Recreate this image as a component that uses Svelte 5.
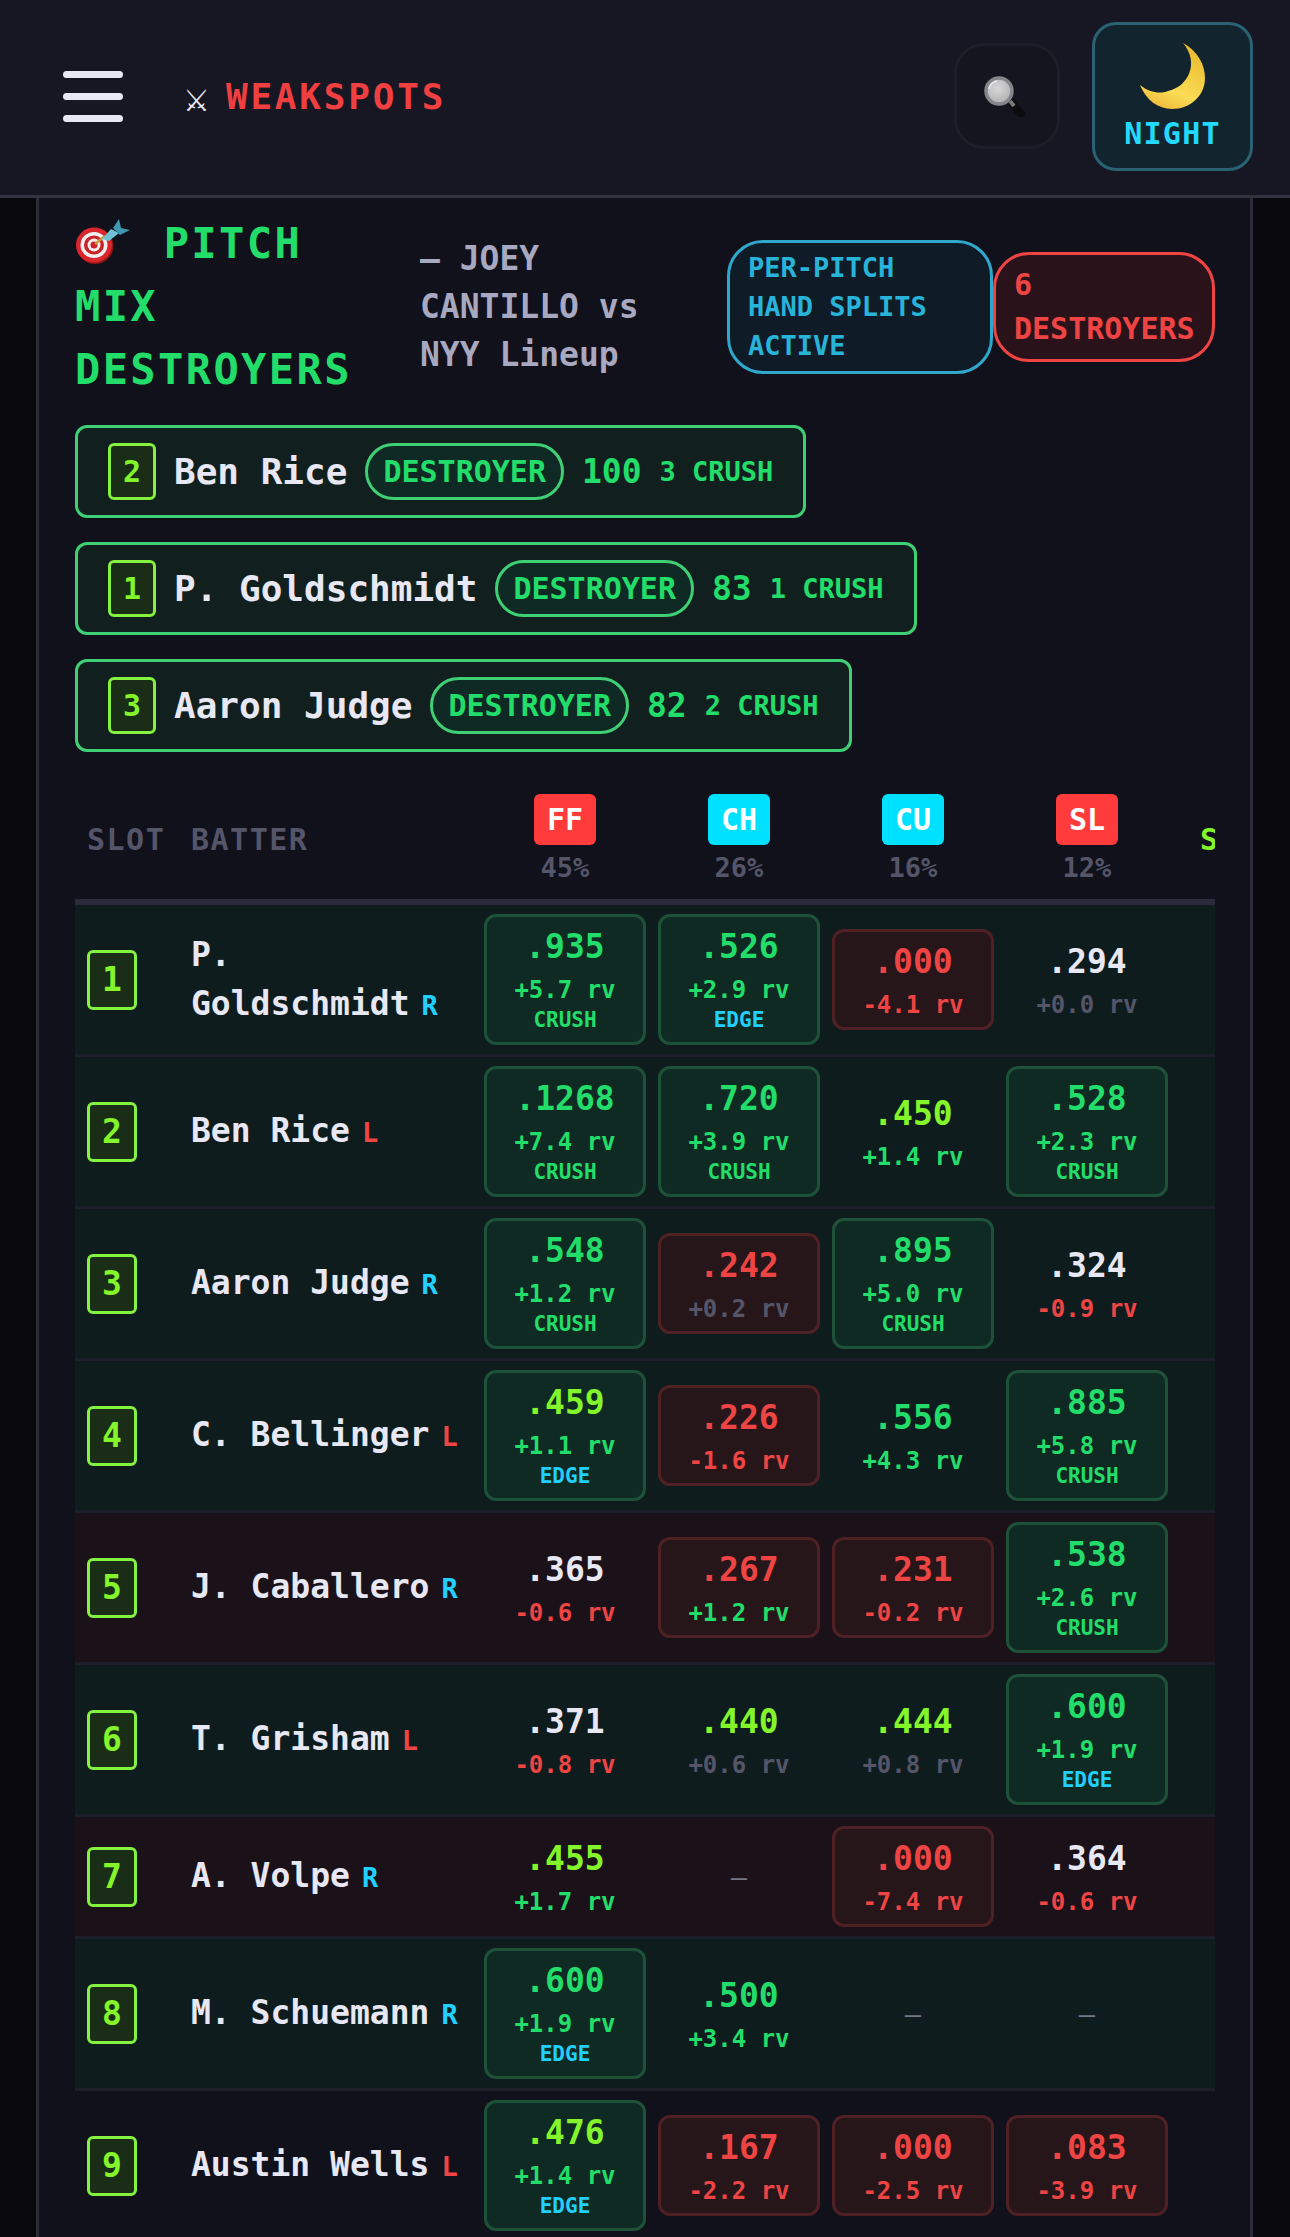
<script>
    const top_batters = [
        { slot: 2, name: "Ben Rice", score: 100, crush: 3 },
        { slot: 1, name: "P. Goldschmidt", score: 83, crush: 1 },
        { slot: 3, name: "Aaron Judge", score: 82, crush: 2 }
    ];

    const pitches = [
        { code: "FF", pct: "45%", kind: "hard" },
        { code: "CH", pct: "26%", kind: "soft" },
        { code: "CU", pct: "16%", kind: "soft" },
        { code: "SL", pct: "12%", kind: "hard" }
    ];

    // value, value colour, rv, rv colour, box, tag
    const c = (v, vc, rv, rc, box = "", tag = "") => ({ v, vc, rv, rc, box, tag });
    const crush = (v, rv) => c(v, "g", rv, "g", "g", "CRUSH");
    const edge = (v, vc, rv) => c(v, vc, rv, "g", "g", "EDGE");
    const bad = (v, rv, rc = "r") => c(v, "r", rv, rc, "r");
    const none = { dash: true };

    const rows = [
        { slot: 1, name: "P. Goldschmidt", hand: "R", tone: "good", cells: [crush(".935", "+5.7"), edge(".526", "g", "+2.9"), bad(".000", "-4.1"), c(".294", "w", "+0.0", "m")] },
        { slot: 2, name: "Ben Rice", hand: "L", tone: "good", cells: [crush(".1268", "+7.4"), crush(".720", "+3.9"), c(".450", "l", "+1.4", "g"), crush(".528", "+2.3")] },
        { slot: 3, name: "Aaron Judge", hand: "R", tone: "good", cells: [crush(".548", "+1.2"), bad(".242", "+0.2", "m"), crush(".895", "+5.0"), c(".324", "w", "-0.9", "r")] },
        { slot: 4, name: "C. Bellinger", hand: "L", tone: "good", cells: [edge(".459", "l", "+1.1"), bad(".226", "-1.6"), c(".556", "g", "+4.3", "g"), crush(".885", "+5.8")] },
        { slot: 5, name: "J. Caballero", hand: "R", tone: "poor", cells: [c(".365", "w", "-0.6", "r"), bad(".267", "+1.2", "g"), bad(".231", "-0.2"), crush(".538", "+2.6")] },
        { slot: 6, name: "T. Grisham", hand: "L", tone: "good", cells: [c(".371", "w", "-0.8", "r"), c(".440", "l", "+0.6", "m"), c(".444", "l", "+0.8", "m"), edge(".600", "g", "+1.9")] },
        { slot: 7, name: "A. Volpe", hand: "R", tone: "poor", cells: [c(".455", "l", "+1.7", "g"), none, bad(".000", "-7.4"), c(".364", "w", "-0.6", "r")] },
        { slot: 8, name: "M. Schuemann", hand: "R", tone: "good", cells: [edge(".600", "g", "+1.9"), c(".500", "g", "+3.4", "g"), none, none] },
        { slot: 9, name: "Austin Wells", hand: "L", tone: "", cells: [edge(".476", "l", "+1.4"), bad(".167", "-2.2"), bad(".000", "-2.5"), bad(".083", "-3.9")] }
    ];
</script>

<div class="page">
    <header class="topbar">
        <button class="burger" aria-label="Menu"><span></span><span></span><span></span></button>
        <div class="logo"><span class="swords">⚔</span><span class="logo-text">WEAKSPOTS</span></div>
        <button class="search-btn" aria-label="Search">
            <svg width="41" height="41" viewBox="0 0 41 41">
                <defs>
                    <radialGradient id="lens" cx="0.45" cy="0.4" r="0.7">
                        <stop offset="0" stop-color="#d8d8d8" />
                        <stop offset="1" stop-color="#a9a9ad" />
                    </radialGradient>
                </defs>
                <path d="M25 24 L37 38" stroke="#0c0c0e" stroke-width="8" stroke-linecap="round" />
                <path d="M26 25 L30 30" stroke="#77777c" stroke-width="4" />
                <circle cx="15" cy="15" r="13" fill="url(#lens)" stroke="#85858c" stroke-width="3.5" />
                <path d="M5 13 A10 10 0 0 1 13 5" fill="none" stroke="#e8e8ea" stroke-width="1.5" />
            </svg>
        </button>
        <button class="night-btn">
            <svg width="65" height="66" viewBox="0 0 65 66">
                <defs>
                    <linearGradient id="moon" x1="0.7" y1="0" x2="0.3" y2="1">
                        <stop offset="0" stop-color="#e9b92c" />
                        <stop offset="0.7" stop-color="#fbdc55" />
                        <stop offset="1" stop-color="#eeb93a" />
                    </linearGradient>
                </defs>
                <path d="M43 0 C58 8 65 22 65 35 C65 53 50 66 32 66 C18 66 6 57 0 42 C10 50 20 51 28 48 C48 44 60 20 43 0 Z" fill="url(#moon)" />
            </svg>
            <span>NIGHT</span>
        </button>
    </header>

    <main class="panel">
        <div class="head">
            <h1 class="title">
                <svg class="target" width="55" height="45" viewBox="0 0 55 45">
                    <ellipse cx="20" cy="27" rx="18.5" ry="18" fill="#8f1414" />
                    <ellipse cx="19" cy="26" rx="18" ry="17.5" fill="#d8262c" />
                    <ellipse cx="19" cy="26" rx="13.5" ry="13" fill="#f4eeee" />
                    <ellipse cx="19" cy="26" rx="10" ry="9.5" fill="#c92228" />
                    <ellipse cx="19" cy="26" rx="6.5" ry="6.5" fill="#f4eeee" />
                    <ellipse cx="19" cy="26" rx="3.5" ry="3.5" fill="#c92228" />
                    <path d="M20 25 L30 17" stroke="#c99a3e" stroke-width="2.5" />
                    <path d="M27 20 L36 10 L44 14 L34 22 Z" fill="#6fc2d4" />
                    <path d="M38 9 L44 0 L46 9 L55 11 L45 16 Z" fill="#3d98b0" />
                </svg>
                PITCH MIX DESTROYERS
            </h1>
            <div class="matchup">— JOEY CANTILLO vs NYY Lineup</div>
            <div class="badges">
                <div class="badge badge-cyan">PER-PITCH HAND SPLITS ACTIVE</div>
                <div class="badge badge-red">6 DESTROYERS</div>
            </div>
        </div>

        <div class="top-list">
            {#each top_batters as b}
                <div class="top-row">
                    <span class="slot">{b.slot}</span>
                    <span class="top-name">{b.name}</span>
                    <span class="pill">DESTROYER</span>
                    <span class="top-score">{b.score}</span>
                    <span class="top-crush">{b.crush} CRUSH</span>
                </div>
            {/each}
        </div>

        <div class="table">
            <div class="grid table-head">
                <div class="th">SLOT</div>
                <div class="th th-batter">BATTER</div>
                {#each pitches as p}
                    <div class="pitch">
                        <span class="chip {p.kind}">{p.code}</span>
                        <span class="pct">{p.pct}</span>
                    </div>
                {/each}
                <div class="th th-score">SCORE</div>
            </div>

            {#each rows as row}
                <div class="grid row {row.tone}">
                    <div class="slot-cell"><span class="slot big">{row.slot}</span></div>
                    <div class="batter"><span>{row.name}</span><span class="hand {row.hand}">{row.hand}</span></div>
                    {#each row.cells as cell}
                        <div class="cell-wrap">
                            {#if cell.dash}
                                <span class="dash">—</span>
                            {:else}
                                <div class="cell box-{cell.box || 'none'}">
                                    <div class="val {cell.vc}">{cell.v}</div>
                                    <div class="rv {cell.rc}">{cell.rv} rv</div>
                                    {#if cell.tag}
                                        <div class="tag {cell.tag}">{cell.tag}</div>
                                    {/if}
                                </div>
                            {/if}
                        </div>
                    {/each}
                    <div></div>
                </div>
            {/each}
        </div>
    </main>
</div>

<style>
    :global(body) {
        background: #08080d;
        font-family: "DejaVu Sans Mono", "Liberation Mono", monospace;
    }

    .page {
        height: 2237px;
        overflow: hidden;
    }

    /* Top bar */

    .topbar {
        display: flex;
        align-items: center;
        height: 192px;
        padding: 0 37px 3px 63px;
        background: #161722;
        border-bottom: 3px solid #33333f;
    }

    .burger {
        display: flex;
        flex-direction: column;
        gap: 15px;
        width: 60px;
        padding: 0;
        background: none;
        border: none;
    }

    .burger span {
        height: 7px;
        border-radius: 4px;
        background: #e8e8f4;
    }

    .logo {
        display: flex;
        align-items: center;
        gap: 16px;
        margin-left: 60px;
        flex: 1;
    }

    .swords {
        font-family: "DejaVu Sans", sans-serif;
        font-size: 30px;
        line-height: 1;
        color: #e8e8f4;
        margin-top: 10px;
    }

    .logo-text {
        font-size: 36px;
        font-weight: bold;
        letter-spacing: 2.8px;
        color: #ef3f41;
    }

    .search-btn {
        display: flex;
        align-items: center;
        justify-content: center;
        width: 106px;
        height: 106px;
        padding: 0 6px 0 0;
        background: #14151e;
        border: 3px solid #1d1e29;
        border-radius: 30px;
    }

    .night-btn {
        display: flex;
        flex-direction: column;
        align-items: center;
        gap: 7px;
        width: 161px;
        height: 149px;
        margin-left: 32px;
        padding: 18px 0 0;
        background: #12252e;
        border: 3px solid #2a6273;
        border-radius: 24px;
        box-sizing: border-box;
    }

    .night-btn span {
        font: bold 30px/36px "DejaVu Sans Mono", monospace;
        letter-spacing: 1.2px;
        color: #22d9ff;
    }

    /* Panel */

    .panel {
        margin: 0 37px 0 36px;
        padding: 14px 35px 0 36px;
        min-height: 2100px;
        background: #10111a;
        border-left: 3px solid #2b2b39;
        border-right: 3px solid #2b2b39;
    }

    .head {
        display: flex;
        align-items: center;
    }

    .title {
        width: 320px;
        margin: 0 25px 0 0;
        font-size: 42px;
        line-height: 63px;
        font-weight: bold;
        letter-spacing: 2.4px;
        color: #22dd6a;
        flex-shrink: 0;
    }

    .target {
        vertical-align: -6px;
        margin-right: 6px;
    }

    .matchup {
        width: 240px;
        font-size: 33px;
        line-height: 48px;
        font-weight: bold;
        color: #a8a8c0;
    }

    .badges {
        display: flex;
        align-items: center;
        margin-left: auto;
    }

    .badge {
        box-sizing: border-box;
        border: 3px solid;
        border-radius: 36px;
        font-weight: bold;
    }

    .badge-cyan {
        width: 266px;
        padding: 5px 18px 6px;
        font-size: 27px;
        line-height: 39px;
        color: #28b4d8;
        border-color: #2fa8cc;
        background: #0f1c28;
    }

    .badge-red {
        width: 222px;
        padding: 8px 18px;
        font-size: 30px;
        line-height: 44px;
        color: #ef4444;
        border-color: #ef4444;
        background: #2a121a;
    }

    /* Top destroyers */

    .top-list {
        display: flex;
        flex-direction: column;
        align-items: flex-start;
        gap: 24px;
        margin-top: 24px;
    }

    .top-row {
        display: flex;
        align-items: center;
        gap: 18px;
        padding: 15px 30px;
        background: #11201f;
        border: 3px solid #3fcf74;
        border-radius: 12px;
    }

    .slot {
        display: flex;
        align-items: center;
        justify-content: center;
        box-sizing: border-box;
        width: 48px;
        height: 57px;
        font-size: 30px;
        font-weight: bold;
        color: #84f52a;
        background: #1a2e17;
        border: 3px solid #84f23f;
        border-radius: 6px;
    }

    .slot.big {
        width: 50px;
        height: 60px;
        font-size: 33px;
    }

    .top-name {
        font-size: 36px;
        font-weight: bold;
        color: #e8e8f4;
    }

    .pill {
        box-sizing: border-box;
        height: 57px;
        padding: 0 15px;
        font-size: 30px;
        line-height: 51px;
        font-weight: bold;
        color: #22dd6a;
        background: #0f2a24;
        border: 3px solid #3fcf74;
        border-radius: 30px;
    }

    .top-score {
        font-size: 33px;
        font-weight: bold;
        color: #22dd6a;
    }

    .top-crush {
        font-size: 27px;
        font-weight: bold;
        color: #22dd6a;
    }

    /* Table */

    .table {
        margin-top: 24px;
        overflow: hidden;
    }

    .grid {
        display: grid;
        grid-template-columns: 104px 299px repeat(4, 174px) 174px;
    }

    .table-head {
        align-items: center;
        padding: 18px 0;
        border-bottom: 6px solid #2a2a3a;
        width: 1140px;
        overflow: hidden;
    }

    .th {
        padding: 4px 0 0 12px;
        font-size: 30px;
        font-weight: bold;
        letter-spacing: 1.5px;
        color: #55556a;
    }

    .th-score {
        padding-left: 26px;
        color: #84f52a;
        white-space: nowrap;
    }

    .pitch {
        display: flex;
        flex-direction: column;
        align-items: center;
        gap: 9px;
    }

    .chip {
        width: 62px;
        height: 51px;
        font-size: 30px;
        line-height: 51px;
        font-weight: bold;
        text-align: center;
        color: #fff;
        border-radius: 6px;
    }

    .chip.hard {
        background: #ff3b3b;
    }

    .chip.soft {
        background: #00e0ff;
    }

    .pct {
        font-size: 27px;
        line-height: 27px;
        font-weight: bold;
        color: #55556a;
    }

    .row {
        align-items: center;
        padding: 9px 0;
        width: 1140px;
        border-bottom: 3px solid #1c1e2a;
    }

    .row.good {
        background: #0e1c1d;
    }

    .row.poor {
        background: #1a1119;
    }

    .slot-cell {
        padding-left: 12px;
    }

    .batter {
        padding-left: 12px;
        font-size: 33px;
        line-height: 49px;
        font-weight: bold;
        color: #e8e8f4;
    }

    .hand {
        margin-left: 12px;
        font-size: 27px;
    }

    .hand.R {
        color: #22d0ff;
    }

    .hand.L {
        color: #ef4444;
    }

    .cell-wrap {
        padding: 0 6px;
        text-align: center;
    }

    .cell {
        box-sizing: border-box;
        padding: 9px 0 7px;
        border: 3px solid transparent;
        border-radius: 12px;
    }

    .box-g {
        background: #0f2a22;
        border-color: #1d5239;
    }

    .box-r {
        background: #261619;
        border-color: #4f2024;
    }

    .val {
        font-size: 33px;
        line-height: 42px;
        font-weight: bold;
    }

    .rv {
        margin-top: 7px;
        font-size: 24px;
        line-height: 30px;
        font-weight: bold;
    }

    .tag {
        font-size: 21px;
        line-height: 30px;
        font-weight: bold;
    }

    .tag.CRUSH {
        color: #22dd6a;
    }

    .tag.EDGE {
        color: #22d0ff;
    }

    .g {
        color: #22dd6a;
    }

    .l {
        color: #84f52a;
    }

    .w {
        color: #e8e8f4;
    }

    .r {
        color: #ef4444;
    }

    .m {
        color: #55556a;
    }

    .dash {
        font-size: 27px;
        color: #77778a;
    }
</style>
